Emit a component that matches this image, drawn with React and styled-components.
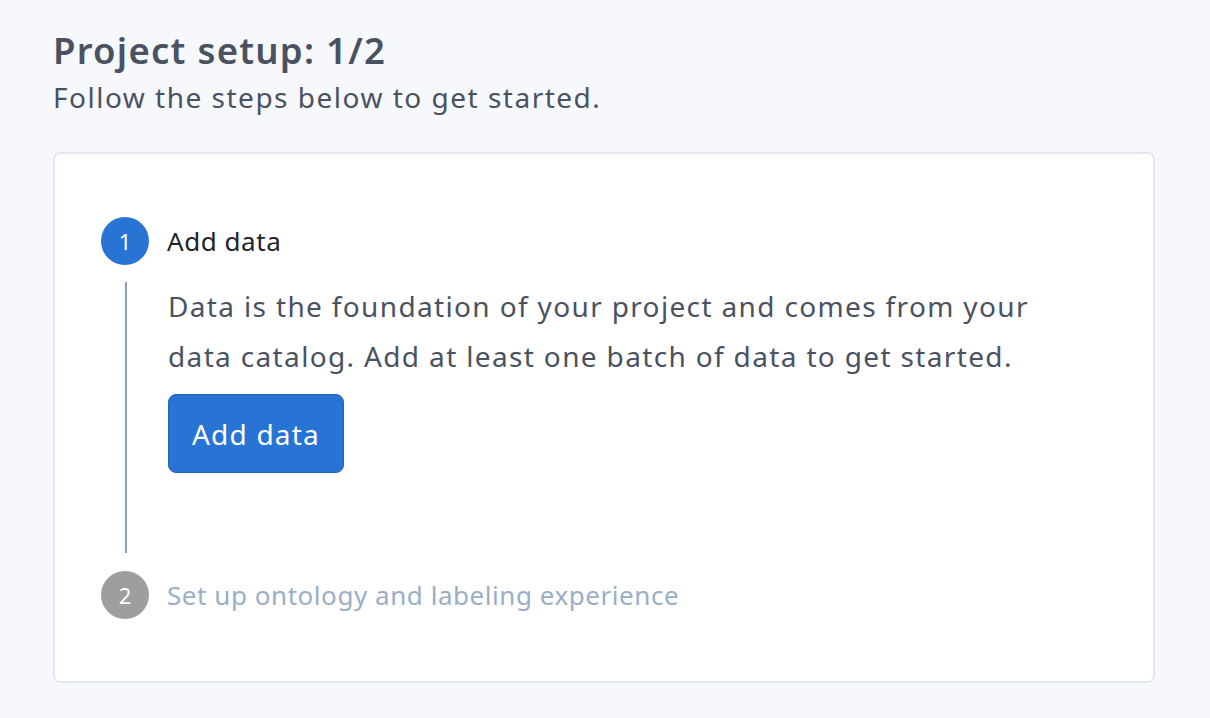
import React from 'react';
import styled, { createGlobalStyle } from 'styled-components';

const GlobalStyle = createGlobalStyle`
	html, body {
		margin: 0;
		padding: 0;
		background: #f6f8fc;
	}
	body {
		font-family: 'Noto Sans', 'Open Sans', sans-serif;
	}
`;

const steps = [
	{
		number: 1,
		title: 'Add data',
		active: true,
		text: 'Data is the foundation of your project and comes from your data catalog. Add at least one batch of data to get started.',
		action: 'Add data',
	},
	{
		number: 2,
		title: 'Set up ontology and labeling experience',
		active: false,
	},
];

export default function App() {
	return (
		<>
			<GlobalStyle />
			<Page>
				<Header>
					<Title>Project setup: 1/2</Title>
					<Subtitle>Follow the steps below to get started.</Subtitle>
				</Header>
				<Card>
					{steps.map((step, i) => (
						<Step key={step.number}>
							<Badge active={step.active}>{step.number}</Badge>
							<StepTitle active={step.active}>{step.title}</StepTitle>
							{step.active && (
								<>
									<Rail>{i < steps.length - 1 && <Line />}</Rail>
									<Body>
										<Description>{step.text}</Description>
										<Button>{step.action}</Button>
									</Body>
								</>
							)}
						</Step>
					))}
				</Card>
			</Page>
		</>
	);
}

// Styles

const Page = styled.div`
	box-sizing: border-box;
	height: 718px;
	padding: 26px 55px 35px 53px;
	display: flex;
	flex-direction: column;
`;

const Header = styled.div`
	display: flex;
	flex-direction: column;
	margin-bottom: 35px;
`;

const Title = styled.h1`
	margin: 0;
	font-size: 36.5px;
	font-weight: 600;
	letter-spacing: 1.25px;
	line-height: 48px;
	color: #4a5261;
`;

const Subtitle = styled.p`
	margin: 3px 0 0;
	font-size: 28px;
	letter-spacing: 1.5px;
	line-height: 40px;
	color: #4a5261;
`;

const Card = styled.div`
	flex: 1;
	background: #fff;
	border: 2px solid #e3e8f0;
	border-radius: 7px;
	padding: 63px 46px 0;
	display: flex;
	flex-direction: column;
`;

const Step = styled.div`
	display: grid;
	grid-template-columns: 48px 1fr;
	column-gap: 19px;
	align-items: center;
`;

const Badge = styled.div`
	width: 48px;
	height: 48px;
	border-radius: 50%;
	background: ${({ active }) => (active ? '#2874d4' : '#9e9e9e')};
	color: #fff;
	font-size: 22px;
	display: flex;
	align-items: center;
	justify-content: center;
`;

const StepTitle = styled.div`
	margin-left: -1px;
	font-size: 26px;
	letter-spacing: 0.55px;
	color: ${({ active }) => (active ? '#212429' : '#9aaec8')};
`;

const Rail = styled.div`
	align-self: stretch;
	display: flex;
	justify-content: center;
	padding: 17px 0 18px 2px;
`;

const Line = styled.div`
	width: 2px;
	background: #8c9db6;
`;

const Body = styled.div`
	padding: 16px 0 98px;
	display: flex;
	flex-direction: column;
	align-items: flex-start;
`;

const Description = styled.p`
	margin: 0 0 13px;
	max-width: 880px;
	font-size: 28px;
	letter-spacing: 1.35px;
	line-height: 50px;
	color: #4a5261;
`;

const Button = styled.button`
	height: 79px;
	padding: 0 23px;
	background: #2874d4;
	border: 1px solid #2364bd;
	border-radius: 8px;
	color: #fff;
	font-family: inherit;
	font-size: 28px;
	letter-spacing: 1.2px;
	cursor: pointer;
`;
